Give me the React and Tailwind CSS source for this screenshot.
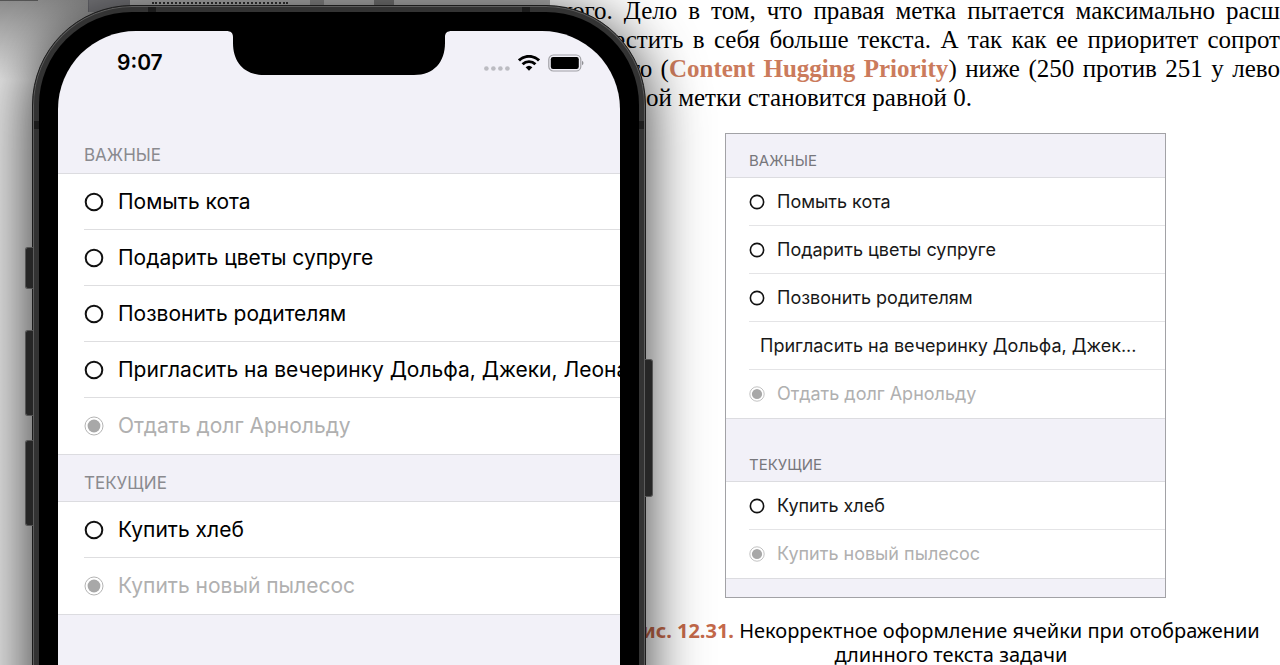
const importantTasks = [
  { text: 'Помыть кота' },
  { text: 'Подарить цветы супруге' },
  { text: 'Позвонить родителям' },
  { text: 'Пригласить на вечеринку Дольфа, Джеки, Леона', shortText: 'Пригласить на вечеринку Дольфа, Джек...' },
  { text: 'Отдать долг Арнольду', done: true },
];

const currentTasks = [
  { text: 'Купить хлеб' },
  { text: 'Купить новый пылесос', done: true },
];

function Mark({ done, className }) {
  return (
    <svg viewBox="0 0 20 20" className={className} aria-hidden="true">
      {done ? (
        <g>
          <circle cx="10" cy="10" r="9" fill="none" stroke="#b4b4b4" strokeWidth="1" />
          <circle cx="10" cy="10" r="6.4" fill="#a8a8a8" />
        </g>
      ) : (
        <circle cx="10" cy="10" r="8.3" fill="none" stroke="#111" strokeWidth="2" />
      )}
    </svg>
  );
}

function PhoneRow({ task }) {
  return (
    <li className="group flex h-14 items-center bg-white pl-[26px]">
      <div className="flex h-full min-w-0 flex-1 items-center gap-3.5 border-b border-[#dedee0] pt-px group-last:border-transparent">
        <Mark done={task.done} className="size-5 shrink-0" />
        <span className={'whitespace-nowrap text-[21px] leading-7 ' + (task.done ? 'text-[#b0b0b0]' : 'text-black')}>{task.text}</span>
      </div>
    </li>
  );
}

function PhoneSection({ title, tasks, headerClass }) {
  return (
    <section>
      <h2 className={'flex items-end pl-[26px] text-[17px] leading-6 text-[#8a8a8f] ' + headerClass}>{title}</h2>
      <ul className="border-y border-[#dcdce0]">
        {tasks.map((task) => (
          <PhoneRow key={task.text} task={task} />
        ))}
      </ul>
    </section>
  );
}

function StatusBar() {
  return (
    <div className="flex h-16 items-center justify-between pl-[59px] pr-9">
      <span className="text-[21px] font-semibold leading-7">9:07</span>
      <div className="flex items-center gap-2">
        <svg viewBox="0 0 26 18" className="h-[18px] w-[26px]" aria-hidden="true">
          <g fill="#bcbcc2">
            <circle cx="2.4" cy="14.5" r="2.3" />
            <circle cx="9.4" cy="14.5" r="2.3" />
            <circle cx="16.4" cy="14.5" r="2.3" />
            <circle cx="23.4" cy="14.5" r="2.3" />
          </g>
        </svg>
        <svg viewBox="0 0 22 16" className="h-4 w-[22px]" aria-hidden="true">
          <g fill="none" stroke="#000" strokeWidth="2.9">
            <path d="M1 5.4a14.3 14.3 0 0 1 20 0" />
            <path d="M4.6 9.3a9.1 9.1 0 0 1 12.8 0" />
          </g>
          <path d="M7.6 12.3a5 5 0 0 1 6.8 0L11 15.8z" fill="#000" />
        </svg>
        <svg viewBox="0 0 36 18" className="h-[18px] w-9" aria-hidden="true">
          <rect x=".8" y="1" width="32" height="16" rx="4.6" fill="none" stroke="#a0a0a5" strokeWidth="1.2" />
          <rect x="2.8" y="3" width="28" height="12" rx="2.2" fill="#000" />
          <path d="M34 6.8c2 .8 2 3.6 0 4.4z" fill="#909095" />
        </svg>
      </div>
    </div>
  );
}

function Phone() {
  return (
    <div className="relative z-10 ml-8 mt-[5px] h-[900px] w-[614px] shrink-0 rounded-[100px] border border-[#1c1c1c] bg-[#333] p-1.5 font-[Inter,sans-serif] shadow-[0_10px_60px_0_rgba(0,0,0,0.8)] ring-1 ring-inset ring-[#5c5c5c]">
      <div className="absolute -left-2 top-[241px] h-[42px] w-2 rounded-l-[3px] border border-r-0 border-[#555] bg-[#262626]" />
      <div className="absolute -left-2 top-[324px] h-[86px] w-2 rounded-l-[3px] border border-r-0 border-[#555] bg-[#262626]" />
      <div className="absolute -left-2 top-[434px] h-[86px] w-2 rounded-l-[3px] border border-r-0 border-[#555] bg-[#262626]" />
      <div className="absolute -right-2 top-[353px] h-[138px] w-2 rounded-r-[3px] border border-l-0 border-[#555] bg-[#262626]" />
      <div className="absolute left-px top-[115px] h-2 w-[5px] bg-[#1c1c1c]" />
      <div className="absolute right-px top-[115px] h-2 w-[5px] bg-[#1c1c1c]" />
      <div className="absolute left-[115px] top-px h-[5px] w-2 bg-[#1c1c1c]" />
      <div className="absolute right-[115px] top-px h-[5px] w-2 bg-[#1c1c1c]" />
      <div className="h-full rounded-[93px] bg-black px-[19px] pt-[19px]">
        <div className="relative h-full overflow-hidden rounded-t-[78px] bg-[#f2f1f8]">
          <svg viewBox="0 0 226 44" className="absolute left-[168px] top-0 h-11 w-[226px]" aria-hidden="true">
            <path d="M0 0C5 0 7 2 7 6V12C7 31 18 44 38 44H188C208 44 219 31 219 12V6C219 2 221 0 226 0Z" fill="#000" />
          </svg>
          <StatusBar />
          <PhoneSection title="ВАЖНЫЕ" tasks={importantTasks} headerClass="h-[78px] pb-1.5" />
          <PhoneSection title="ТЕКУЩИЕ" tasks={currentTasks} headerClass="h-[46px] pb-1.5" />
        </div>
      </div>
    </div>
  );
}

function FigureRow({ task }) {
  return (
    <li className="group h-12 bg-white pl-[23px]">
      <div className="flex h-full items-center gap-3 border-b border-[#e4e4e6] pt-px group-last:border-transparent">
        {!task.shortText && <Mark done={task.done} className="size-4 shrink-0" />}
        <span
          className={
            'whitespace-nowrap text-[18px] leading-6 ' +
            (task.done ? 'text-[#b0b0b0]' : 'text-[#181818]') +
            (task.shortText ? ' pl-[11px]' : '')
          }
        >
          {task.shortText || task.text}
        </span>
      </div>
    </li>
  );
}

function FigureSection({ title, tasks, headerClass }) {
  return (
    <section>
      <h2 className={'flex items-end pb-1.5 pl-[23px] text-[15px] leading-5 text-[#77777c] ' + headerClass}>{title}</h2>
      <ul className="border-y border-[#dcdce0]">
        {tasks.map((task) => (
          <FigureRow key={task.text} task={task} />
        ))}
      </ul>
    </section>
  );
}

function Article() {
  return (
    <article className="-ml-24 min-h-screen min-w-0 flex-1 bg-white">
      <div className="-mt-1 whitespace-nowrap font-['Liberation_Serif',serif] text-[25px] leading-[29px] text-black">
        <p className="[text-align-last:justify]">ского. Дело в том, что правая метка пытается максимально расш</p>
        <p className="pl-16 [text-align-last:justify]">естить в себя больше текста. А так как ее приоритет сопрот</p>
        <p className="pl-20 [text-align-last:justify]">
          го (<b className="text-[#cb7b5c]">Content Hugging Priority</b>) ниже (250 против 251 у лево
        </p>
        <p className="pl-24">ой метки становится равной 0.</p>
      </div>
      <figure>
        <div className="ml-[175px] mt-[21px] w-[441px] border border-[#a2a2a6] bg-[#f2f1f8] pb-[18px] font-[Inter,sans-serif]">
          <FigureSection title="ВАЖНЫЕ" tasks={importantTasks} headerClass="h-[43px]" />
          <FigureSection title="ТЕКУЩИЕ" tasks={currentTasks} headerClass="h-[62px]" />
        </div>
        <figcaption className="mt-[21px] pl-20 pr-2 text-center font-['Noto_Sans',sans-serif] text-[20px] leading-6 text-black">
          <b className="text-[#c4694a]">ис. 12.31.</b> Некорректное оформление ячейки при отображении длинного текста задачи
        </figcaption>
      </figure>
    </article>
  );
}

function WindowEdge() {
  return (
    <div className="absolute inset-x-0 top-0 flex h-3" aria-hidden="true">
      <div className="h-px w-[38px] bg-[#555]" />
      <div className="w-[50px]" />
      <div className="w-[42px] border-l border-[#66666c] bg-[#77777b]" />
      <div className="w-[180px] bg-[#b2b2b2] px-[22px] pt-0.5">
        <div className="border-t-2 border-dotted border-[#333]" />
      </div>
      <div className="w-3.5 bg-[#8a8a8a]" />
      <div className="w-[50px] bg-[#b2b2b2]" />
      <div className="w-5 bg-[#777]" />
      <div className="w-[156px] bg-[#b2b2b2]" />
    </div>
  );
}

export default function App() {
  return (
    <main className="relative flex h-screen items-start overflow-hidden bg-linear-to-b from-[#8c8c8c] to-[#e4e4e4] to-[80px]">
      <WindowEdge />
      <Phone />
      <Article />
    </main>
  );
}
